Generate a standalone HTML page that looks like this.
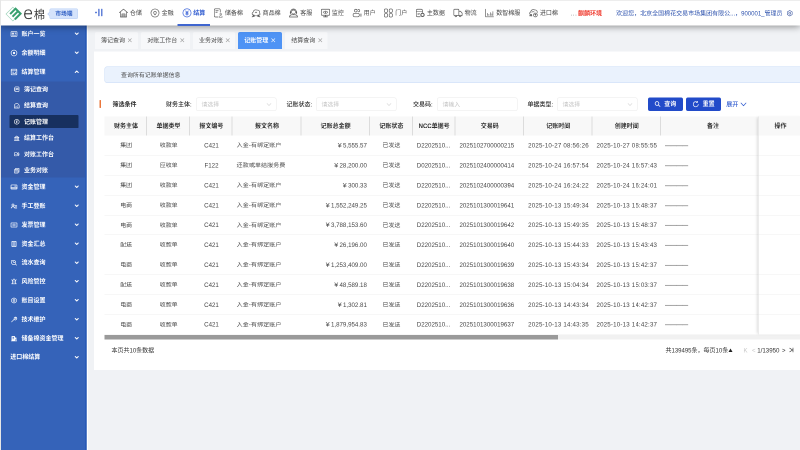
<!DOCTYPE html>
<html lang="zh-CN"><head><meta charset="utf-8"><title>记账管理</title>
<style>
*{margin:0;padding:0;box-sizing:border-box}
html,body{width:800px;height:450px;overflow:hidden;background:#f0f2f5}
#app{position:absolute;left:0;top:0;width:1600px;height:900px;transform:scale(.5);transform-origin:0 0;will-change:transform;font:12px/1 "Liberation Sans","Noto Sans CJK SC",sans-serif;color:#333;overflow:hidden}
.ic{display:block;flex:none}
/* header */
#hd{position:absolute;left:0;top:0;width:1600px;height:51px;background:#fff;z-index:20;box-shadow:0 2px 14px rgba(0,0,0,.45);border-top:1px solid #dcdcdc}
#logo{position:absolute;left:10px;top:12px}
#ln{position:absolute;left:45.500px;top:9.500px;font-size:22.500px;line-height:30px;color:#3a3a3a;white-space:nowrap;font-weight:400}
#ln i{font-style:normal;font-size:34px;font-family:"DejaVu Sans Light","DejaVu Sans",sans-serif;font-weight:200;display:inline-block;transform:scaleX(.97);transform-origin:0 50%;margin-right:1px;vertical-align:-1.500px;line-height:30px;color:#333;-webkit-text-stroke:.7px #333}
#bd{position:absolute;left:98.500px;top:15.500px;width:57.500px;height:21.500px;background:#d5e3fb;border:1px solid #b9d0f6;border-radius:3px;color:#2f5fc4;font-weight:bold;font-size:11.500px;line-height:19.500px;text-align:center;padding-left:1px}
#bd:before{content:"";position:absolute;left:-3.500px;top:7px;width:5px;height:5px;background:#d5e3fb;border-left:1px solid #b9d0f6;border-bottom:1px solid #b9d0f6;transform:rotate(45deg)}
#tg{position:absolute;left:189px;top:16px}
#nav{position:absolute;left:229.200px;top:-1px;height:51px;display:flex;align-items:center;color:#444}
.ni{display:flex;align-items:center;height:51px;padding:0 8.670px;position:relative;white-space:nowrap}
.ni span{margin-left:4px;font-size:12px;position:relative;top:.4px}
.ni .ic{color:#585858}.ni.on .ic{color:#3a62d8}.ni.on{color:#2f5bd0;font-weight:bold}
.ni.on:after{content:"";position:absolute;left:-1px;right:-1px;bottom:0;height:3px;background:#3f66d0}
#env{position:absolute;left:1141px;top:19px;font-size:12px;line-height:14px;color:#777;white-space:nowrap;letter-spacing:1.300px}
#env b{color:#f03a2e;margin-left:1px;letter-spacing:0}
#wel{position:absolute;right:35px;top:19px;font-size:12px;line-height:14px;color:#2d52ae;white-space:nowrap}
#gear{position:absolute;left:1573px;top:19px;color:#3a56a0}
#ls{position:absolute;left:0;top:0;width:1.700px;height:900px;background:#e6e6e6;z-index:30}
#ws{position:absolute;left:173.600px;top:51px;width:2.600px;height:849px;background:#fff;z-index:4}
/* sidebar */
#sb{position:absolute;left:2px;top:49.400px;width:171px;height:851px;background:#3563b9;color:#fff;font-weight:bold;z-index:5;}#sb:after{content:"";position:absolute;right:0;top:0;width:3px;height:100%;background:#2759b6}
.mi{height:37.800px;display:flex;align-items:center;padding-left:18.500px;position:relative}
.mi .ic{margin-right:8.500px}
.noic{display:none}
.cv{position:absolute;left:147px;top:15px}
.sub{background:#345aa9;padding:2.900px 0 2.900px}
.si{height:24.500px;margin:0 16px 8px 17px}.si:last-child{margin-bottom:0}
.sib{height:24.500px;display:flex;align-items:center;padding-left:8px;border-radius:2px}
.si .ic{margin-right:8.500px;margin-left:-.5px}.si .mt,.si .ic{position:relative;top:.8px}
.si.act .sib{background:#17305f;margin-top:-.2px;height:25.200px}
/* tabs */
.tab{position:absolute;top:64px;height:33.500px;background:#f7f8fa;border-radius:3px 3px 0 0;display:flex;align-items:center;padding-left:12.500px;color:#484848;white-space:nowrap}
.tab .x{margin-left:5px;color:#999}
.tab.on{background:#4e93f5;border-radius:4px 4px 0 0;color:#fff;font-weight:bold}
.tab.on .x{color:#fff}
#card{position:absolute;left:188px;top:103px;width:1420px;height:636.500px;background:#fff}
#info{position:absolute;left:209px;top:132.500px;width:1400px;height:33px;background:#eaf2fd;border:1px solid #c8dbf7;border-radius:5px;line-height:32.200px;padding-left:32px;color:#4a4a4a;font-size:11.900px}
#ob{position:absolute;left:198.500px;top:200px;width:3.500px;height:16px;background:#ea773c;border-radius:1px}
.fl{position:absolute;top:202px;line-height:14px;font-size:12px;color:#2a2a2a;white-space:nowrap;font-weight:500}
.fl i{font-style:normal;margin-left:2px}
.fi{position:absolute;top:195px;height:27px;width:161px;border:1px solid #eaeaea;border-radius:4px;background:#fff;color:#c6c6c6;line-height:25px;padding-left:10px;font-size:11.700px}
.sa{position:absolute;right:9.500px;top:10px}
.btn{position:absolute;top:194.700px;height:27.300px;background:#224bc9;border-radius:4px;color:#fff;font-weight:bold;display:flex;align-items:center;justify-content:center;font-size:12px}
.btn svg{margin-right:7px}
/* table */
#tb{position:absolute;left:209.200px;top:233px;width:1400px;font-size:12.300px;color:#474747}
.tr{display:flex;height:39.800px;border-bottom:1px solid #f0f0f0;align-items:center;white-space:nowrap}
.tr.th{height:38.400px;background:#f8f8f8;color:#333;font-weight:bold;border-bottom:none;font-size:12px}
.c{text-align:center;flex:none;overflow:hidden;padding-left:2.500px}
.th .c{height:38.400px;line-height:38.400px;box-shadow:inset -1px 0 0 #dcdcdc,inset 1px 0 0 #dcdcdc;padding-left:2px}
.th .c:first-child{box-shadow:inset -1px 0 0 #dcdcdc}
.c.l{text-align:left;padding-left:9px}
.tr .c{position:relative;top:.6px}.th .c{top:0}
.c.z{font-size:11.900px}
.c.d{letter-spacing:.38px}
.c.l.z{letter-spacing:.3px}
.c.r{text-align:right;padding-right:5px}
.h{font-style:normal;display:inline-block;width:.62em;text-align:center;transform:scaleX(1.600)}
.y{font-weight:normal;margin-right:3.500px;display:inline-block;transform:scaleX(1.150)}
.ds{color:#777;letter-spacing:-1px;font-weight:bold}
#fx{position:absolute;left:1517px;top:233px;width:90px;height:436px;background:#fff;box-shadow:-1px 0 0 #dadada,-5px 0 5px -2px rgba(0,0,0,.13);z-index:3}
#fx p{height:39.800px;border-bottom:1px solid #f0f0f0}#fx div{height:38.400px;background:#f8f8f8;line-height:38.400px;font-weight:bold;text-align:center;color:#333;width:88px}
#scr{position:absolute;left:209.200px;top:670px;width:1400px;height:9px;background:#f1f1f1}
#scr i{display:block;width:907px;height:9px;background:#9a9a9a}
.ft{position:absolute;top:693.600px;line-height:14px;font-size:12px;color:#333;white-space:nowrap}
</style></head><body>
<div id="app">
<div id="hd">
 <svg id="logo" width="36" height="31" viewBox="0 0 36 31"><path d="M15.800 1.340 29.600 15.100 15.800 28.860 2 15.100Z" fill="#fff" stroke="#8fcdb0" stroke-width="1.100"/><g transform="matrix(12.900 12.900 -12.900 12.900 21.100 1.400)"><path d="M0 0H1V1H.78V.22H.61V.97H.39V.22H.22V.95H0Z" fill="#37a06e"/></g></svg>
 <div id="ln"><i>e</i>棉</div>
 <div id="bd">市场端</div>
 <svg id="tg" width="18" height="16" viewBox="0 0 18 16" fill="#3b62cf"><circle cx="3" cy="8" r="1.800"/><rect x="7.600" y=".5" width="2.400" height="15" rx="1"/><rect x="13.400" y=".5" width="2.400" height="15" rx="1"/></svg>
 <div id="nav"><div class="ni"><svg class="ic" width="18" height="18" viewBox="0 0 18 18" fill="none" stroke="currentColor" stroke-width="1.5" stroke-linecap="round" stroke-linejoin="round" style="stroke-width:1.3"><path d="M.8 8.300 9 1.300l8.200 7"/><path d="M2.800 7v10h12.400V7"/><path d="M5.800 17v-6.200h6.400V17M5.800 13h6.400M5.800 15h6.400" stroke-width="1.200"/></svg><span>仓储</span></div><div class="ni"><svg class="ic" width="18" height="18" viewBox="0 0 18 18" fill="none" stroke="currentColor" stroke-width="1.5" stroke-linecap="round" stroke-linejoin="round" style="stroke-width:1.3"><circle cx="9" cy="9" r="8.100"/><path d="M9 12.800C6.900 10.800 6.400 9.500 6.400 8.500a2.600 2.600 0 0 1 5.200 0c0 1-.5 2.300-2.600 4.300Z"/></svg><span>金融</span></div><div class="ni on"><svg class="ic" width="18" height="18" viewBox="0 0 18 18" fill="none" stroke="currentColor" stroke-width="1.5" stroke-linecap="round" stroke-linejoin="round" style="stroke-width:1.3"><circle cx="9" cy="8.800" r="8.200" stroke-width="1.400"/><path d="M6.500 4.800 9 8.500l2.500-3.700M9 8.500v5M6.500 9h5M6.500 11.300h5" stroke-width="1.500"/></svg><span>结算</span></div><div class="ni"><svg class="ic" width="18" height="18" viewBox="0 0 18 18" fill="none" stroke="currentColor" stroke-width="1.5" stroke-linecap="round" stroke-linejoin="round" style="stroke-width:1.3"><path d="M12.500 7.500V3a2.500 2.500 0 0 0-2.500-2.500H3A2.500 2.500 0 0 0 .5 3v11.500A2.500 2.500 0 0 0 3 17h5"/><path d="M3.500 4.500h5M3.500 7.500h3"/><circle cx="13.300" cy="11.200" r="1.700" stroke-width="1"/><path d="M10 17c.2-3.600 6.400-3.600 6.600 0Z" stroke-width="1"/></svg><span>储备棉</span></div><div class="ni"><svg class="ic" width="18" height="18" viewBox="0 0 18 18" fill="none" stroke="currentColor" stroke-width="1.5" stroke-linecap="round" stroke-linejoin="round" style="stroke-width:1.3"><path d="M3.800 13.200C.6 12.600.3 8.600 3.300 7.300 3.600 3.400 7.800 1.400 11 3.300c3.400-.9 6.500 2.500 5 6 1.900 1.300 1.200 3.800-1.300 3.900"/><path d="M4.500 13.500q4.500 2.500 9.500 0" stroke-width="1.200"/><path d="M1 16.800 4.800 12l1.400 3.500ZM17 16.800 13.200 12l-1.400 3.500Z" fill="currentColor" stroke-width=".8"/><path d="M7.300 8.600 9 7l1.700 1.600" stroke-width="1.200"/></svg><span>商品棉</span></div><div class="ni"><svg class="ic" width="18" height="18" viewBox="0 0 18 18" fill="none" stroke="currentColor" stroke-width="1.5" stroke-linecap="round" stroke-linejoin="round" style="stroke-width:1.3"><circle cx="9" cy="7" r="4"/><path d="M3.200 8V6.800a5.800 5.800 0 0 1 11.600 0V8"/><path d="M2.900 6.800v3M15.100 6.800v3" stroke-width="2"/><path d="M.8 17c.5-3 2.500-4.500 5.200-4.500h6c2.700 0 4.700 1.500 5.200 4.500Z"/></svg><span>客服</span></div><div class="ni"><svg class="ic" width="18" height="18" viewBox="0 0 18 18" fill="none" stroke="currentColor" stroke-width="1.5" stroke-linecap="round" stroke-linejoin="round" style="stroke-width:1.3"><rect x=".7" y="1.500" width="16.600" height="12" rx="1"/><path d="M9 13.500V16M5 16.600h8" stroke-width="1.600"/><path d="M4.300 7.500c2.500-3.200 6.900-3.200 9.400 0-2.500 3.200-6.900 3.200-9.400 0Z" stroke-width="1.200"/><circle cx="9" cy="7.500" r="1.300" fill="currentColor" stroke="none"/></svg><span>监控</span></div><div class="ni"><svg class="ic" width="18" height="18" viewBox="0 0 18 18" fill="none" stroke="currentColor" stroke-width="1.5" stroke-linecap="round" stroke-linejoin="round" style="stroke-width:1.3"><circle cx="6.600" cy="4.300" r="2.800"/><path d="M11.300 2.200a2.300 2.300 0 1 1 0 4.200"/><rect x="1.200" y="9.600" width="12.400" height="7" rx="3"/><path d="M16.900 10.800v5" stroke-width="1.600"/></svg><span>用户</span></div><div class="ni"><svg class="ic" width="18" height="18" viewBox="0 0 18 18" fill="none" stroke="currentColor" stroke-width="1.5" stroke-linecap="round" stroke-linejoin="round" style="stroke-width:1.3"><rect x=".8" y=".8" width="6.400" height="7" rx="2.400"/><rect x="10.400" y=".8" width="6.400" height="7" rx="2.400"/><rect x=".8" y="10.200" width="6.400" height="7" rx="2.400"/><rect x="10.400" y="10.200" width="6.400" height="7" rx="2.400"/></svg><span>门户</span></div><div class="ni"><svg class="ic" width="18" height="18" viewBox="0 0 18 18" fill="none" stroke="currentColor" stroke-width="1.5" stroke-linecap="round" stroke-linejoin="round" style="stroke-width:1.3"><path d="M13 8V4a2.500 2.500 0 0 0-2.500-2.500h-7.500A2.500 2.500 0 0 0 .5 4v10A2.500 2.500 0 0 0 3 16.500h5.500"/><path d="M.5 5.500h12.500M3.500 9.500h4M3.500 12.500h3" stroke-width="1.100"/><circle cx="13" cy="12.800" r="3.300" stroke-width="2"/></svg><span>主数据</span></div><div class="ni"><svg class="ic" width="18" height="18" viewBox="0 0 18 18" fill="none" stroke="currentColor" stroke-width="1.5" stroke-linecap="round" stroke-linejoin="round" style="stroke-width:1.3"><rect x=".7" y="1.500" width="10" height="12.500" rx="1.200"/><path d="M10.700 5.500h3.300l3.300 3.800V14h-6.600"/><circle cx="4.800" cy="15" r="1.700" fill="#fff"/><circle cx="13.300" cy="15" r="1.700" fill="#fff"/></svg><span>物流</span></div><div class="ni"><svg class="ic" width="18" height="18" viewBox="0 0 18 18" fill="none" stroke="currentColor" stroke-width="1.5" stroke-linecap="round" stroke-linejoin="round" style="stroke-width:1.3"><path d="M1.300 1.500v15.200h15.700"/><path d="M4.800 14V9.500M7.800 14V11.500M10.800 14V8M13.800 14V10.500M15.800 14V6" stroke-width="1.200"/></svg><span>数智棉服</span></div><div class="ni"><svg class="ic" width="18" height="18" viewBox="0 0 18 18" fill="none" stroke="currentColor" stroke-width="1.5" stroke-linecap="round" stroke-linejoin="round" style="stroke-width:1.3"><path d="M4.500 12.500C.8 12.500.3 8 3.500 6.800 3.800 2.800 8.300.8 11.500 3c3.300-.6 5.800 2.500 4.800 5.500"/><circle cx="12.800" cy="13" r="3.800"/><path d="M12.800 11v4M11.300 12.500l1.500-1.500 1.500 1.500" stroke-width="1.100"/><path d="M.8 14.500 5 11.300l1 3.500Z" fill="currentColor" stroke-width=".8"/><path d="M5.500 7.500Q8 5.500 10.500 7" stroke-width="1.100"/></svg><span>进口棉</span></div></div>
 <div id="env">...<b>麒麟环境</b></div>
 <div id="wel">欢迎您，北京全国棉花交易市场集团有限公...，900001_管理员</div>
 <svg id="gear" width="13" height="13" viewBox="0 0 20 20" fill="none" stroke="currentColor" stroke-width="1.700"><path d="M10 1.500 17.400 5.700v8.600L10 18.500 2.600 14.300V5.700Z"/><circle cx="10" cy="10" r="3"/></svg>
</div>
<div id="ls"></div><div id="ws"></div>
<div id="sb"><div class="mi"><svg class="ic" width="14" height="14" viewBox="0 0 20 20" fill="none" stroke="currentColor" stroke-width="1.5" stroke-linecap="round" stroke-linejoin="round" style="stroke-width:1.9"><rect x="1.500" y="3" width="17" height="14" rx="1.500"/><path d="M5 7h4v3H5ZM5 13.500h10M12 7h3v3"/></svg><span class="mt">账户一览</span><svg class="cv" width="9" height="7" viewBox="0 0 9 7" fill="none" stroke="#fff" stroke-width="2" stroke-linecap="round" stroke-linejoin="round"><path d="M1.500 2 4.500 5 7.500 2"/></svg></div><div class="mi"><svg class="ic" width="14" height="14" viewBox="0 0 20 20" fill="none" stroke="currentColor" stroke-width="1.5" stroke-linecap="round" stroke-linejoin="round" style="stroke-width:1.9"><circle cx="10" cy="10" r="8.300"/><circle cx="10" cy="10" r="2.300" fill="currentColor"/></svg><span class="mt">余额明细</span><svg class="cv" width="9" height="7" viewBox="0 0 9 7" fill="none" stroke="#fff" stroke-width="2" stroke-linecap="round" stroke-linejoin="round"><path d="M1.500 2 4.500 5 7.500 2"/></svg></div><div class="mi"><svg class="ic" width="14" height="14" viewBox="0 0 20 20" fill="none" stroke="currentColor" stroke-width="1.5" stroke-linecap="round" stroke-linejoin="round" style="stroke-width:1.9"><rect x="2" y="2" width="16" height="16" rx="1"/><path d="M2 6.500h16M6 10.500h3M6 14.500h8v-4"/></svg><span class="mt">结算管理</span><svg class="cv" width="9" height="7" viewBox="0 0 9 7" fill="none" stroke="#fff" stroke-width="2" stroke-linecap="round" stroke-linejoin="round"><path d="M1.500 5 4.500 2 7.500 5"/></svg></div><div class="sub"><div class="si"><div class="sib"><svg class="ic" width="13" height="13" viewBox="0 0 20 20" fill="none" stroke="currentColor" stroke-width="1.5" stroke-linecap="round" stroke-linejoin="round" style="stroke-width:1.8"><rect x="4" y="3" width="13" height="14" rx="2"/><path d="M2.500 7h3M2.500 10h3M2.500 13h3M9 7.500h5v4H9Z"/></svg><span class="mt">簿记查询</span></div></div><div class="si"><div class="sib"><svg class="ic" width="13" height="13" viewBox="0 0 20 20" fill="none" stroke="currentColor" stroke-width="1.5" stroke-linecap="round" stroke-linejoin="round" style="stroke-width:1.8"><path d="M2.500 17V10.500a7.500 7.500 0 0 1 15 0V17Z"/><path d="M7.500 16.500v-6M14 10.200a2.400 2.400 0 1 0 0 4.300" stroke-width="1.500"/></svg><span class="mt">结算查询</span></div></div><div class="si act"><div class="sib"><svg class="ic" width="13" height="13" viewBox="0 0 20 20" fill="none" stroke="currentColor" stroke-width="1.5" stroke-linecap="round" stroke-linejoin="round" style="stroke-width:1.8"><circle cx="10" cy="10" r="7.500"/><path d="M8 6.500 10 9.500 12 6.500M10 9.500V14M8 11h4"/></svg><span class="mt">记账管理</span></div></div><div class="si"><div class="sib"><svg class="ic" width="13" height="13" viewBox="0 0 20 20" fill="none" stroke="currentColor" stroke-width="1.5" stroke-linecap="round" stroke-linejoin="round" style="stroke-width:1.8"><path d="M10 3 3 8h14ZM4.500 8v7M8 8v7M12 8v7M15.500 8v7M2.500 17h15"/></svg><span class="mt">结算工作台</span></div></div><div class="si"><div class="sib"><svg class="ic" width="13" height="13" viewBox="0 0 20 20" fill="none" stroke="currentColor" stroke-width="1.5" stroke-linecap="round" stroke-linejoin="round" style="stroke-width:1.8"><rect x="2.500" y="5" width="9" height="10" rx="2"/><path d="M14 5c4 0 4 10 0 10M6 10h3M13 8l4 4"/></svg><span class="mt">对账工作台</span></div></div><div class="si"><div class="sib"><svg class="ic" width="13" height="13" viewBox="0 0 20 20" fill="none" stroke="currentColor" stroke-width="1.5" stroke-linecap="round" stroke-linejoin="round" style="stroke-width:1.8"><rect x="3" y="6" width="11" height="11" rx="1"/><path d="M6 6V3h11v11h-3M5.500 10h6M5.500 13.500h6"/></svg><span class="mt">业务对账</span></div></div></div><div class="mi"><svg class="ic" width="14" height="14" viewBox="0 0 20 20" fill="none" stroke="currentColor" stroke-width="1.5" stroke-linecap="round" stroke-linejoin="round" style="stroke-width:1.9"><rect x="1.500" y="4" width="17" height="12" rx="1.500"/><path d="M1.500 12.500h17" stroke-width="2.600"/><path d="M12 7.500h3"/></svg><span class="mt">资金管理</span><svg class="cv" width="9" height="7" viewBox="0 0 9 7" fill="none" stroke="#fff" stroke-width="2" stroke-linecap="round" stroke-linejoin="round"><path d="M1.500 2 4.500 5 7.500 2"/></svg></div><div class="mi"><svg class="ic" width="14" height="14" viewBox="0 0 20 20" fill="none" stroke="currentColor" stroke-width="1.5" stroke-linecap="round" stroke-linejoin="round" style="stroke-width:1.9"><circle cx="7" cy="7" r="3"/><path d="M2 16c0-5 9-5 10-1M12 9h6M13.500 12.500H18M12 16h6"/></svg><span class="mt">手工登账</span><svg class="cv" width="9" height="7" viewBox="0 0 9 7" fill="none" stroke="#fff" stroke-width="2" stroke-linecap="round" stroke-linejoin="round"><path d="M1.500 2 4.500 5 7.500 2"/></svg></div><div class="mi"><svg class="ic" width="14" height="14" viewBox="0 0 20 20" fill="none" stroke="currentColor" stroke-width="1.5" stroke-linecap="round" stroke-linejoin="round" style="stroke-width:1.9"><rect x="1.500" y="4" width="17" height="12" rx="1"/><rect x="7" y="7.500" width="6" height="5" stroke-width="1.500"/></svg><span class="mt">发票管理</span><svg class="cv" width="9" height="7" viewBox="0 0 9 7" fill="none" stroke="#fff" stroke-width="2" stroke-linecap="round" stroke-linejoin="round"><path d="M1.500 2 4.500 5 7.500 2"/></svg></div><div class="mi"><svg class="ic" width="14" height="14" viewBox="0 0 20 20" fill="none" stroke="currentColor" stroke-width="1.5" stroke-linecap="round" stroke-linejoin="round" style="stroke-width:1.9"><rect x="4" y="2.500" width="12" height="15" rx="1"/><path d="M7 6.500h6M7 10h6M7 13.500h6"/></svg><span class="mt">资金汇总</span><svg class="cv" width="9" height="7" viewBox="0 0 9 7" fill="none" stroke="#fff" stroke-width="2" stroke-linecap="round" stroke-linejoin="round"><path d="M1.500 2 4.500 5 7.500 2"/></svg></div><div class="mi"><svg class="ic" width="14" height="14" viewBox="0 0 20 20" fill="none" stroke="currentColor" stroke-width="1.5" stroke-linecap="round" stroke-linejoin="round" style="stroke-width:1.9"><circle cx="9" cy="10" r="6"/><path d="M9 7v3h3M14 15l3.500 2.500M3 4l2 2"/></svg><span class="mt">流水查询</span><svg class="cv" width="9" height="7" viewBox="0 0 9 7" fill="none" stroke="#fff" stroke-width="2" stroke-linecap="round" stroke-linejoin="round"><path d="M1.500 2 4.500 5 7.500 2"/></svg></div><div class="mi"><svg class="ic" width="14" height="14" viewBox="0 0 20 20" fill="none" stroke="currentColor" stroke-width="1.5" stroke-linecap="round" stroke-linejoin="round" style="stroke-width:1.9"><path d="M5.500 16V9.500a4.500 4.500 0 0 1 9 0V16M3 16.500h14M10 2v1.500M3.500 5l1 1M16.500 5l-1 1M10 9.500V13"/></svg><span class="mt">风险管控</span><svg class="cv" width="9" height="7" viewBox="0 0 9 7" fill="none" stroke="#fff" stroke-width="2" stroke-linecap="round" stroke-linejoin="round"><path d="M1.500 2 4.500 5 7.500 2"/></svg></div><div class="mi"><svg class="ic" width="14" height="14" viewBox="0 0 20 20" fill="none" stroke="currentColor" stroke-width="1.5" stroke-linecap="round" stroke-linejoin="round" style="stroke-width:1.9"><path d="M10 2.500 16.500 6.200v7.600L10 17.500 3.500 13.800V6.200Z"/><circle cx="10" cy="10" r="2.500"/></svg><span class="mt">账目设置</span><svg class="cv" width="9" height="7" viewBox="0 0 9 7" fill="none" stroke="#fff" stroke-width="2" stroke-linecap="round" stroke-linejoin="round"><path d="M1.500 2 4.500 5 7.500 2"/></svg></div><div class="mi"><svg class="ic" width="14" height="14" viewBox="0 0 20 20" fill="none" stroke="currentColor" stroke-width="1.5" stroke-linecap="round" stroke-linejoin="round" style="stroke-width:1.9"><path d="M3 17 10 10"/><path d="M10.500 5.500a4 4 0 0 1 5.500-2l-2.500 2.500 1 1L17 4.500a4 4 0 0 1-6.500 5Z"/></svg><span class="mt">技术维护</span><svg class="cv" width="9" height="7" viewBox="0 0 9 7" fill="none" stroke="#fff" stroke-width="2" stroke-linecap="round" stroke-linejoin="round"><path d="M1.500 2 4.500 5 7.500 2"/></svg></div><div class="mi"><svg class="ic" width="14" height="14" viewBox="0 0 20 20" fill="none" stroke="currentColor" stroke-width="1.5" stroke-linecap="round" stroke-linejoin="round" style="stroke-width:1.9"><path d="M4 17V4h8v13M12 8h4v9M2.500 17h15" fill="currentColor"/><path d="M6.500 7.500h3M6.500 11h3" stroke="#3563b9"/></svg><span class="mt">储备棉资金管理</span><svg class="cv" width="9" height="7" viewBox="0 0 9 7" fill="none" stroke="#fff" stroke-width="2" stroke-linecap="round" stroke-linejoin="round"><path d="M1.500 2 4.500 5 7.500 2"/></svg></div><div class="mi"><span class="noic"></span><span class="mt">进口棉结算</span><svg class="cv" width="9" height="7" viewBox="0 0 9 7" fill="none" stroke="#fff" stroke-width="2" stroke-linecap="round" stroke-linejoin="round"><path d="M1.500 2 4.500 5 7.500 2"/></svg></div></div>
<div class="tab" style="left:189.5px;width:86.7px"><span>簿记查询</span><svg class="x" width="9" height="9" viewBox="0 0 8 8" fill="none" stroke="currentColor" stroke-width="1.150"><path d="M.8.8l6.400 6.400M7.200.8.800 7.200"/></svg></div><div class="tab" style="left:282.0px;width:98.0px"><span>对账工作台</span><svg class="x" width="9" height="9" viewBox="0 0 8 8" fill="none" stroke="currentColor" stroke-width="1.150"><path d="M.8.8l6.400 6.400M7.200.8.800 7.200"/></svg></div><div class="tab" style="left:385.5px;width:84.5px"><span>业务对账</span><svg class="x" width="9" height="9" viewBox="0 0 8 8" fill="none" stroke="currentColor" stroke-width="1.150"><path d="M.8.8l6.400 6.400M7.200.8.800 7.200"/></svg></div><div class="tab on" style="left:476.0px;width:88.0px"><span>记账管理</span><svg class="x" width="9" height="9" viewBox="0 0 8 8" fill="none" stroke="currentColor" stroke-width="1.150"><path d="M.8.8l6.400 6.400M7.200.8.800 7.200"/></svg></div><div class="tab" style="left:570.0px;width:84.5px"><span>结算查询</span><svg class="x" width="9" height="9" viewBox="0 0 8 8" fill="none" stroke="currentColor" stroke-width="1.150"><path d="M.8.8l6.400 6.400M7.200.8.800 7.200"/></svg></div>
<div id="card"></div>
<div id="info">查询所有记账单据信息</div>
<div id="ob"></div>
<div class="fl" style="left:225px;font-weight:bold">筛选条件</div>
<div class="fl" style="left:332px">财务主体:</div>
<div class="fi" style="left:392px">请选择<svg class="sa" width="10" height="6" viewBox="0 0 10 6" fill="none" stroke="#c6c6c6" stroke-width="1.050" stroke-linecap="round" stroke-linejoin="round"><path d="M1 1 5 5 9 1"/></svg></div>
<div class="fl" style="left:573px">记账状态:</div>
<div class="fi" style="left:632px">请选择<svg class="sa" width="10" height="6" viewBox="0 0 10 6" fill="none" stroke="#c6c6c6" stroke-width="1.050" stroke-linecap="round" stroke-linejoin="round"><path d="M1 1 5 5 9 1"/></svg></div>
<div class="fl" style="left:826px">交易码:</div>
<div class="fi" style="left:874px">请输入</div>
<div class="fl" style="left:1055px">单据类型:</div>
<div class="fi" style="left:1114px">请选择<svg class="sa" width="10" height="6" viewBox="0 0 10 6" fill="none" stroke="#c6c6c6" stroke-width="1.050" stroke-linecap="round" stroke-linejoin="round"><path d="M1 1 5 5 9 1"/></svg></div>
<div class="btn" style="left:1296px;width:70px"><svg width="12" height="12" viewBox="0 0 12 12" fill="none" stroke="#fff" stroke-width="1.500" stroke-linecap="round"><circle cx="5" cy="5" r="3.700"/><path d="M8 8l3 3"/></svg>查询</div>
<div class="btn" style="left:1372.300px;width:69.700px"><svg width="13" height="13" viewBox="0 0 12 12" fill="none" stroke="#fff" stroke-width="1.300" stroke-linecap="round"><path d="M10.700 6.500A4.700 4.700 0 1 1 8.800 2.200"/><path d="M9.200.3v2.300H6.900" stroke-linejoin="round"/></svg>重置</div>
<div class="fl" style="left:1452.500px;color:#2f5bd0">展开</div>
<svg style="position:absolute;left:1481px;top:205px" width="12" height="8" viewBox="0 0 12 8" fill="none" stroke="#2f5bd0" stroke-width="1.400" stroke-linecap="round" stroke-linejoin="round"><path d="M1 1 6 6.500 11 1"/></svg>
<div id="tb"><div class="tr th"><div class="c" style="width:83.8px">财务主体</div><div class="c" style="width:86.2px">单据类型</div><div class="c" style="width:85.2px">报文编号</div><div class="c" style="width:137.3px">报文名称</div><div class="c" style="width:137.1px">记账总金额</div><div class="c" style="width:85.8px">记账状态</div><div class="c" style="width:85.4px">NCC单据号</div><div class="c" style="width:137.3px">交易码</div><div class="c" style="width:136.7px">记账时间</div><div class="c" style="width:137.2px">创建时间</div><div class="c" style="width:207.6px">备注</div></div><div class="tr"><div class="c z" style="width:83.8px">集团</div><div class="c z" style="width:86.2px">收款单</div><div class="c" style="width:85.2px">C421</div><div class="c l z" style="width:137.3px">入金-有绑定账户</div><div class="c r" style="width:137.1px"><b class="y">¥</b>5,555.57</div><div class="c z" style="width:85.8px">已发送</div><div class="c l" style="width:85.4px">D2202510...</div><div class="c l" style="width:137.3px">2025102700000215</div><div class="c l d" style="width:136.7px">2025-10-27 08:56:26</div><div class="c l d" style="width:137.2px">2025-10-27 08:55:55</div><div class="c l" style="width:207.6px"><span class="ds">————</span></div></div><div class="tr"><div class="c z" style="width:83.8px">集团</div><div class="c z" style="width:86.2px">应收单</div><div class="c" style="width:85.2px">F122</div><div class="c l z" style="width:137.3px">还款或单结服务费</div><div class="c r" style="width:137.1px"><b class="y">¥</b>28,200.00</div><div class="c z" style="width:85.8px">已发送</div><div class="c l" style="width:85.4px">D0202510...</div><div class="c l" style="width:137.3px">2025102400000414</div><div class="c l d" style="width:136.7px">2025-10-24 16:57:54</div><div class="c l d" style="width:137.2px">2025-10-24 16:57:43</div><div class="c l" style="width:207.6px"><span class="ds">————</span></div></div><div class="tr"><div class="c z" style="width:83.8px">集团</div><div class="c z" style="width:86.2px">收款单</div><div class="c" style="width:85.2px">C421</div><div class="c l z" style="width:137.3px">入金-有绑定账户</div><div class="c r" style="width:137.1px"><b class="y">¥</b>300.33</div><div class="c z" style="width:85.8px">已发送</div><div class="c l" style="width:85.4px">D2202510...</div><div class="c l" style="width:137.3px">2025102400000394</div><div class="c l d" style="width:136.7px">2025-10-24 16:24:22</div><div class="c l d" style="width:137.2px">2025-10-24 16:24:01</div><div class="c l" style="width:207.6px"><span class="ds">————</span></div></div><div class="tr"><div class="c z" style="width:83.8px">电商</div><div class="c z" style="width:86.2px">收款单</div><div class="c" style="width:85.2px">C421</div><div class="c l z" style="width:137.3px">入金-有绑定账户</div><div class="c r" style="width:137.1px"><b class="y">¥</b>1,552,249.25</div><div class="c z" style="width:85.8px">已发送</div><div class="c l" style="width:85.4px">D2202510...</div><div class="c l" style="width:137.3px">2025101300019641</div><div class="c l d" style="width:136.7px">2025-10-13 15:49:34</div><div class="c l d" style="width:137.2px">2025-10-13 15:48:37</div><div class="c l" style="width:207.6px"><span class="ds">————</span></div></div><div class="tr"><div class="c z" style="width:83.8px">电商</div><div class="c z" style="width:86.2px">收款单</div><div class="c" style="width:85.2px">C421</div><div class="c l z" style="width:137.3px">入金-有绑定账户</div><div class="c r" style="width:137.1px"><b class="y">¥</b>3,788,153.60</div><div class="c z" style="width:85.8px">已发送</div><div class="c l" style="width:85.4px">D2202510...</div><div class="c l" style="width:137.3px">2025101300019642</div><div class="c l d" style="width:136.7px">2025-10-13 15:49:35</div><div class="c l d" style="width:137.2px">2025-10-13 15:48:37</div><div class="c l" style="width:207.6px"><span class="ds">————</span></div></div><div class="tr"><div class="c z" style="width:83.8px">配送</div><div class="c z" style="width:86.2px">收款单</div><div class="c" style="width:85.2px">C421</div><div class="c l z" style="width:137.3px">入金-有绑定账户</div><div class="c r" style="width:137.1px"><b class="y">¥</b>26,196.00</div><div class="c z" style="width:85.8px">已发送</div><div class="c l" style="width:85.4px">D2202510...</div><div class="c l" style="width:137.3px">2025101300019640</div><div class="c l d" style="width:136.7px">2025-10-13 15:44:33</div><div class="c l d" style="width:137.2px">2025-10-13 15:43:43</div><div class="c l" style="width:207.6px"><span class="ds">————</span></div></div><div class="tr"><div class="c z" style="width:83.8px">电商</div><div class="c z" style="width:86.2px">收款单</div><div class="c" style="width:85.2px">C421</div><div class="c l z" style="width:137.3px">入金-有绑定账户</div><div class="c r" style="width:137.1px"><b class="y">¥</b>1,253,409.00</div><div class="c z" style="width:85.8px">已发送</div><div class="c l" style="width:85.4px">D2202510...</div><div class="c l" style="width:137.3px">2025101300019639</div><div class="c l d" style="width:136.7px">2025-10-13 15:43:34</div><div class="c l d" style="width:137.2px">2025-10-13 15:42:37</div><div class="c l" style="width:207.6px"><span class="ds">————</span></div></div><div class="tr"><div class="c z" style="width:83.8px">配送</div><div class="c z" style="width:86.2px">收款单</div><div class="c" style="width:85.2px">C421</div><div class="c l z" style="width:137.3px">入金-有绑定账户</div><div class="c r" style="width:137.1px"><b class="y">¥</b>48,589.18</div><div class="c z" style="width:85.8px">已发送</div><div class="c l" style="width:85.4px">D2202510...</div><div class="c l" style="width:137.3px">2025101300019638</div><div class="c l d" style="width:136.7px">2025-10-13 15:04:34</div><div class="c l d" style="width:137.2px">2025-10-13 15:03:37</div><div class="c l" style="width:207.6px"><span class="ds">————</span></div></div><div class="tr"><div class="c z" style="width:83.8px">电商</div><div class="c z" style="width:86.2px">收款单</div><div class="c" style="width:85.2px">C421</div><div class="c l z" style="width:137.3px">入金-有绑定账户</div><div class="c r" style="width:137.1px"><b class="y">¥</b>1,302.81</div><div class="c z" style="width:85.8px">已发送</div><div class="c l" style="width:85.4px">D2202510...</div><div class="c l" style="width:137.3px">2025101300019636</div><div class="c l d" style="width:136.7px">2025-10-13 14:43:34</div><div class="c l d" style="width:137.2px">2025-10-13 14:42:37</div><div class="c l" style="width:207.6px"><span class="ds">————</span></div></div><div class="tr"><div class="c z" style="width:83.8px">电商</div><div class="c z" style="width:86.2px">收款单</div><div class="c" style="width:85.2px">C421</div><div class="c l z" style="width:137.3px">入金-有绑定账户</div><div class="c r" style="width:137.1px"><b class="y">¥</b>1,879,954.83</div><div class="c z" style="width:85.8px">已发送</div><div class="c l" style="width:85.4px">D2202510...</div><div class="c l" style="width:137.3px">2025101300019637</div><div class="c l d" style="width:136.7px">2025-10-13 14:43:35</div><div class="c l d" style="width:137.2px">2025-10-13 14:42:37</div><div class="c l" style="width:207.6px"><span class="ds">————</span></div></div></div>
<div id="fx"><div>操作</div><p></p><p></p><p></p><p></p><p></p><p></p><p></p><p></p><p></p><p></p></div>
<div id="scr"><i></i></div>
<div class="ft" style="left:223px">本页共10条数据</div>
<div class="ft" style="left:1331px">共139495条，每页10条</div>
<svg style="position:absolute;left:1456.500px;top:696.500px" width="8" height="7" viewBox="0 0 7 6"><path d="M3.500 0 7 6H0Z" fill="#222"/></svg>
<div class="ft" style="left:1487px;color:#c8c8c8">K</div>
<div class="ft" style="left:1504px;color:#c8c8c8">&lt;</div>
<div class="ft" style="left:1514.500px;font-size:12.300px">1/13950</div>
<div class="ft" style="left:1564px">&gt;</div>
<svg style="position:absolute;left:1578px;top:695px" width="9" height="10" viewBox="0 0 9 10" fill="none" stroke="#333" stroke-width="1.200"><path d="M1 1l6 4-6 4M8 .5v9"/></svg>
</div>
</body></html>
